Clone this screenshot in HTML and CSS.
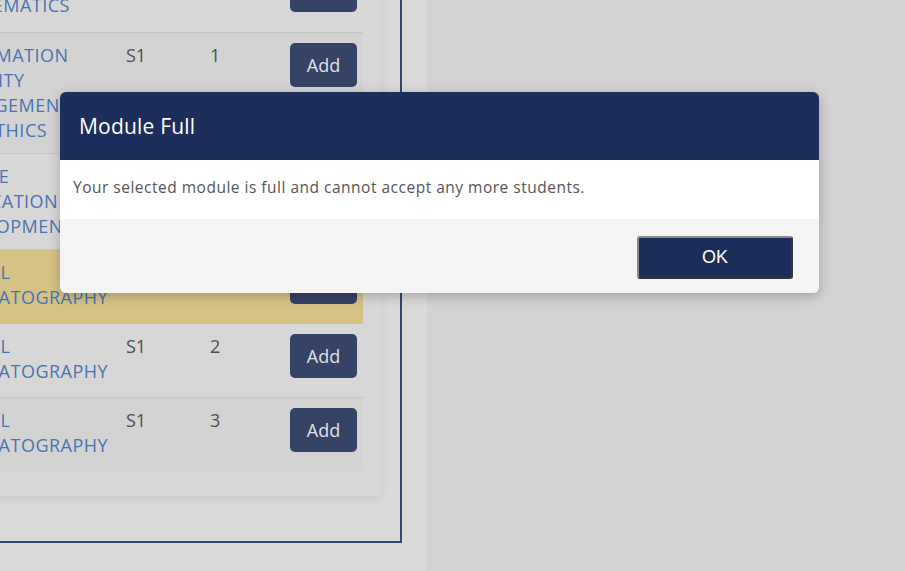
FILE: index.html
```html
<!DOCTYPE html>
<html lang="en">
<head>
<meta charset="utf-8">
<title>Module selection</title>
<link rel="stylesheet" href="styles.css">
</head>
<body>
<div class="page">
  <div class="main">
    <div class="frame">
      <div class="card">
        <div class="table">
          <div class="row">
            <div class="name">DISCRETE<br>MATHEMATICS</div>
            <div class="cell">S1</div>
            <div class="cell">2</div>
            <div class="act"><button class="add">Add</button></div>
          </div>
          <div class="row odd">
            <div class="name">INFORMATION<br>SECURITY<br>MANAGEMENT<br>AND ETHICS</div>
            <div class="cell">S1</div>
            <div class="cell">1</div>
            <div class="act"><button class="add">Add</button></div>
          </div>
          <div class="row">
            <div class="name">MOBILE<br>APPLICATION<br>DEVELOPMENT</div>
            <div class="cell">S1</div>
            <div class="cell">1</div>
            <div class="act"><button class="add">Add</button></div>
          </div>
          <div class="row selected">
            <div class="name">DIGITAL<br>CINEMATOGRAPHY</div>
            <div class="cell">S1</div>
            <div class="cell">1</div>
            <div class="act"><button class="add">Add</button></div>
          </div>
          <div class="row">
            <div class="name">DIGITAL<br>CINEMATOGRAPHY</div>
            <div class="cell">S1</div>
            <div class="cell">2</div>
            <div class="act"><button class="add">Add</button></div>
          </div>
          <div class="row odd">
            <div class="name">DIGITAL<br>CINEMATOGRAPHY</div>
            <div class="cell">S1</div>
            <div class="cell">3</div>
            <div class="act"><button class="add">Add</button></div>
          </div>
        </div>
      </div>
    </div>
  </div>
  <div class="side"></div>
</div>

<div class="modal" role="dialog" aria-labelledby="modal-title">
  <div class="modal-header"><h2 id="modal-title" class="modal-title">Module Full</h2></div>
  <div class="modal-body">Your selected module is full and cannot accept any more students.</div>
  <div class="modal-footer"><button class="ok">OK</button></div>
</div>
</body>
</html>
```

FILE: styles.css
```css
*, *::before, *::after {
  box-sizing: border-box;
}
html, body {
  margin: 0;
  padding: 0;
}
body {
  width: 905px;
  height: 571px;
  overflow: hidden;
  background: #d9d9d9;
  font-family: "Open Sans", sans-serif;
  position: relative;
}
.page {
  display: flex;
  height: 571px;
}
.main {
  width: 427px;
  flex: none;
  overflow: hidden;
  background: #d9d9d9;
}
.side {
  flex: 1;
  background: #d3d3d3;
}
.frame {
  width: 501px;
  margin-left: -99px;
  margin-top: -81px;
  border: 2px solid #34466e;
  padding: 19px 19px 45px 19px;
  background: #d9d9d9;
}
.card {
  background: #d7d7d7;
  border-radius: 6px;
  box-shadow: 0 3px 10px rgba(0, 0, 0, 0.07);
  padding: 18px 18px 25px 18px;
}
.row {
  display: grid;
  grid-template-columns: 1fr 84px 80px 67px;
  min-height: 74px;
  padding: 10px 6px 10px 0;
  border-top: 1px solid #c6c6c6;
  font-size: 18px;
  line-height: 25px;
}
.row:first-child {
  border-top: none;
}
.row.odd {
  background: #d3d3d3;
}
.row.selected {
  background: #d5c385;
}
.name {
  color: #4a73b4;
  letter-spacing: 0.5px;
}
.cell {
  color: #4d4d4d;
}
.act {
  display: flex;
}
.add {
  width: 67px;
  height: 44px;
  border: none;
  border-radius: 5px;
  background: #354367;
  color: #e2e2e2;
  font-family: inherit;
  font-size: 18px;
  padding: 0;
}
.modal {
  position: absolute;
  left: 60px;
  top: 92px;
  width: 759px;
  border-radius: 6px;
  overflow: hidden;
  box-shadow: 0 3px 12px rgba(0, 0, 0, 0.25);
}
.modal-header {
  height: 68px;
  background: #1c2e5a;
  display: flex;
  align-items: center;
  padding: 0 19px;
}
.modal-title {
  margin: 0;
  font-size: 21px;
  font-weight: 400;
  letter-spacing: 0.2px;
  color: #ffffff;
}
.modal-body {
  height: 59px;
  background: #ffffff;
  padding: 0 13px 5px 13px;
  display: flex;
  align-items: center;
  color: #555555;
  font-size: 15.5px;
  letter-spacing: 0.5px;
}
.modal-footer {
  height: 74px;
  background: #f4f4f4;
  display: flex;
  justify-content: flex-end;
  align-items: flex-start;
  padding: 17px 26px 0 0;
}
.ok {
  width: 156px;
  height: 43px;
  background: #1b2d59;
  color: #ffffff;
  border: 2px outset #8a8a8a;
  border-radius: 3px;
  font-family: "Liberation Sans", Arial, sans-serif;
  font-size: 18px;
}
```
